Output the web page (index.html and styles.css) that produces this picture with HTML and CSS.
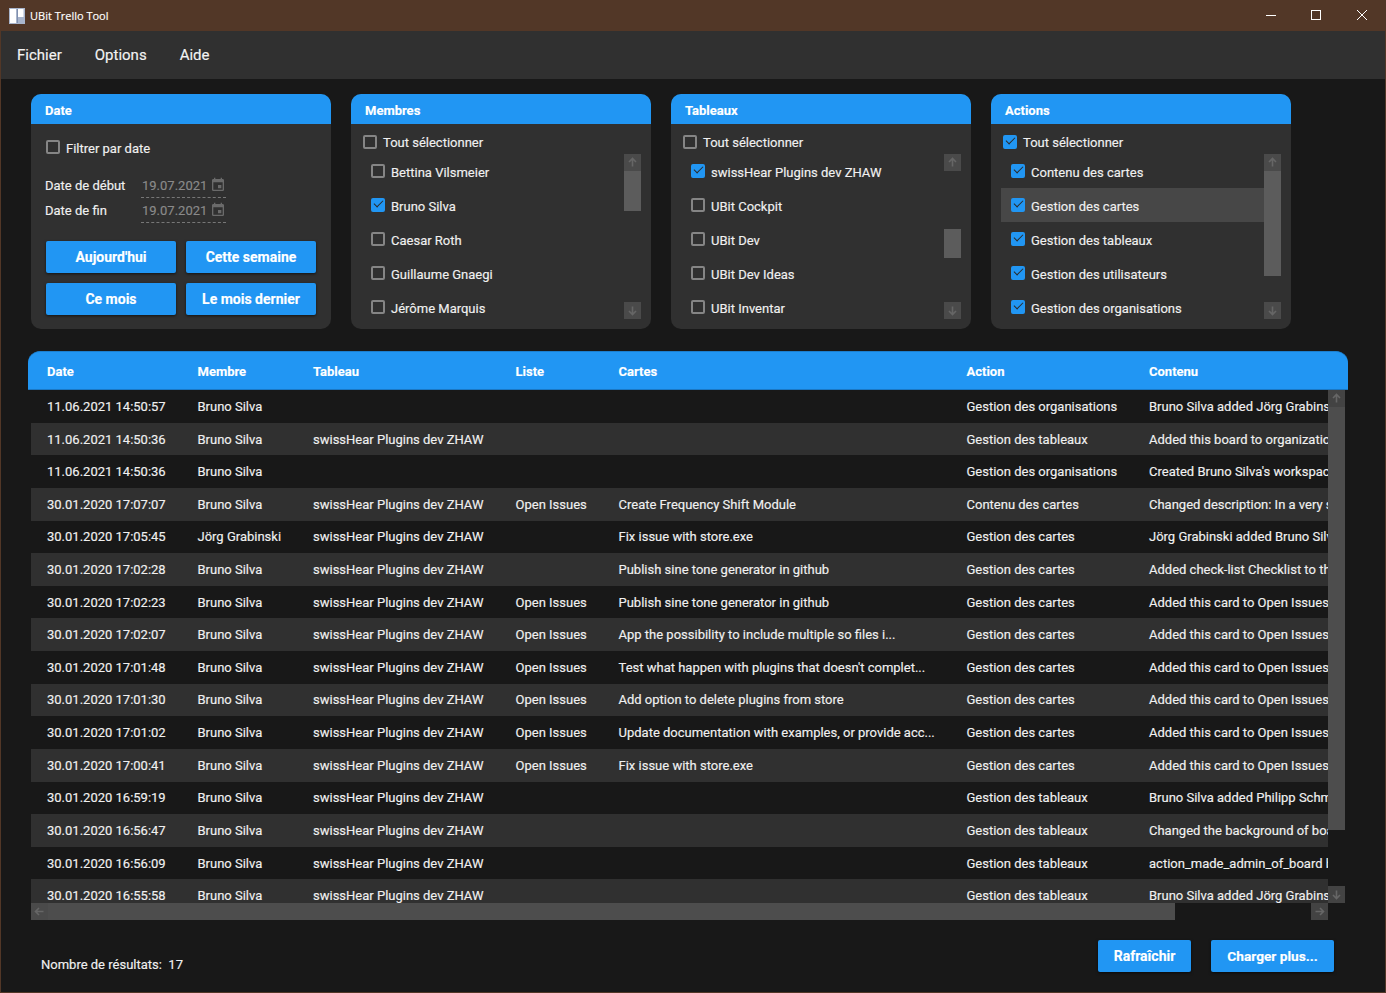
FILE: index.html
```html
<!DOCTYPE html>
<html lang="fr">
<head>
<meta charset="utf-8">
<title>UBit Trello Tool</title>
<link rel="stylesheet" href="styles.css">
</head>
<body>
<div class="window">
  <header class="titlebar">
    <svg class="logo" width="16" height="16" viewBox="0 0 16 16"><rect width="16" height="16" fill="#a9b5cc"/><rect x="1" y="1" width="6.500" height="14" fill="#fff"/><rect x="9" y="1" width="5.500" height="8" fill="#fff"/><rect x="7.500" y="1" width="1.500" height="14" fill="#7f8fae"/></svg>
    <span class="title">UBit Trello Tool</span>
    <div class="winctl">
      <svg width="46" height="31" viewBox="0 0 46 31"><path d="M19 15.500h10" stroke="#fff" fill="none"/></svg>
      <svg width="46" height="31" viewBox="0 0 46 31"><rect x="18.500" y="10.500" width="9" height="9" stroke="#fff" fill="none"/></svg>
      <svg width="46" height="31" viewBox="0 0 46 31"><path d="M18 10l10 10M28 10L18 20" stroke="#fff" fill="none"/></svg>
    </div>
  </header>
  <nav class="menu"><span>Fichier</span><span>Options</span><span>Aide</span></nav>
  <main class="content">
    <section class="filters">
      <div class="card">
        <h2 class="card-head">Date</h2>
        <div class="date-body">
          <label class="check date-check"><i class="box"></i>Filtrer par date</label>
          <div class="date-row"><span class="date-label">Date de début</span><span class="date-field">19.07.2021<svg class="cal" viewBox="0 0 24 24" width="16" height="16"><path fill="#6a6a6a" d="M19 19H5V8h14M16 1v2H8V1H6v2H5c-1.110 0-2 .89-2 2v14a2 2 0 0 0 2 2h14a2 2 0 0 0 2-2V5c0-1.100-.9-2-2-2h-1V1m-1 11h-5v5h5v-5z"/></svg></span></div>
          <div class="date-row"><span class="date-label">Date de fin</span><span class="date-field">19.07.2021<svg class="cal" viewBox="0 0 24 24" width="16" height="16"><path fill="#6a6a6a" d="M19 19H5V8h14M16 1v2H8V1H6v2H5c-1.110 0-2 .89-2 2v14a2 2 0 0 0 2 2h14a2 2 0 0 0 2-2V5c0-1.100-.9-2-2-2h-1V1m-1 11h-5v5h5v-5z"/></svg></span></div>
          <div class="date-btns">
            <button class="btn">Aujourd'hui</button><button class="btn">Cette semaine</button>
            <button class="btn">Ce mois</button><button class="btn">Le mois dernier</button>
          </div>
        </div>
      </div>

      <div class="card">
        <h2 class="card-head">Membres</h2>
        <label class="check all"><i class="box"></i>Tout sélectionner</label>
        <div class="listwrap">
          <ul class="list">
            <li class="check"><i class="box"></i>Bettina Vilsmeier</li>
            <li class="check"><i class="box on"></i>Bruno Silva</li>
            <li class="check"><i class="box"></i>Caesar Roth</li>
            <li class="check"><i class="box"></i>Guillaume Gnaegi</li>
            <li class="check"><i class="box"></i>Jérôme Marquis</li>
          </ul>
          <div class="vbar">
            <span class="arrow"><svg viewBox="0 0 17 17"><path d="M8.500 12.500v-8M5 8l3.500-3.500L12 8"/></svg></span>
            <span class="thumb thumb-a"></span>
            <span class="arrow bottom"><svg viewBox="0 0 17 17"><path d="M8.500 4.500v8M5 9l3.500 3.500L12 9"/></svg></span>
          </div>
        </div>
      </div>

      <div class="card">
        <h2 class="card-head">Tableaux</h2>
        <label class="check all"><i class="box"></i>Tout sélectionner</label>
        <div class="listwrap">
          <ul class="list">
            <li class="check"><i class="box on"></i>swissHear Plugins dev ZHAW</li>
            <li class="check"><i class="box"></i>UBit Cockpit</li>
            <li class="check"><i class="box"></i>UBit Dev</li>
            <li class="check"><i class="box"></i>UBit Dev Ideas</li>
            <li class="check"><i class="box"></i>UBit Inventar</li>
          </ul>
          <div class="vbar">
            <span class="arrow"><svg viewBox="0 0 17 17"><path d="M8.500 12.500v-8M5 8l3.500-3.500L12 8"/></svg></span>
            <span class="thumb thumb-b"></span>
            <span class="arrow bottom"><svg viewBox="0 0 17 17"><path d="M8.500 4.500v8M5 9l3.500 3.500L12 9"/></svg></span>
          </div>
        </div>
      </div>

      <div class="card">
        <h2 class="card-head">Actions</h2>
        <label class="check all"><i class="box on"></i>Tout sélectionner</label>
        <div class="listwrap">
          <ul class="list">
            <li class="check"><i class="box on"></i>Contenu des cartes</li>
            <li class="check hover"><i class="box on"></i>Gestion des cartes</li>
            <li class="check"><i class="box on"></i>Gestion des tableaux</li>
            <li class="check"><i class="box on"></i>Gestion des utilisateurs</li>
            <li class="check"><i class="box on"></i>Gestion des organisations</li>
          </ul>
          <div class="vbar">
            <span class="arrow"><svg viewBox="0 0 17 17"><path d="M8.500 12.500v-8M5 8l3.500-3.500L12 8"/></svg></span>
            <span class="thumb thumb-c"></span>
            <span class="arrow bottom"><svg viewBox="0 0 17 17"><path d="M8.500 4.500v8M5 9l3.500 3.500L12 9"/></svg></span>
          </div>
        </div>
      </div>
    </section>

    <section class="table">
      <div class="row thead"><span>Date</span><span>Membre</span><span>Tableau</span><span>Liste</span><span>Cartes</span><span>Action</span><span>Contenu</span></div>
      <div class="tbody">
        <div class="tleft">
          <div class="rows">
            <div class="row"><span>11.06.2021 14:50:57</span><span>Bruno Silva</span><span></span><span></span><span></span><span>Gestion des organisations</span><span>Bruno Silva added Jörg Grabinski to this board</span></div>
            <div class="row"><span>11.06.2021 14:50:36</span><span>Bruno Silva</span><span>swissHear Plugins dev ZHAW</span><span></span><span></span><span>Gestion des tableaux</span><span>Added this board to organization</span></div>
            <div class="row"><span>11.06.2021 14:50:36</span><span>Bruno Silva</span><span></span><span></span><span></span><span>Gestion des organisations</span><span>Created Bruno Silva's workspace</span></div>
            <div class="row"><span>30.01.2020 17:07:07</span><span>Bruno Silva</span><span>swissHear Plugins dev ZHAW</span><span>Open Issues</span><span>Create Frequency Shift Module</span><span>Contenu des cartes</span><span>Changed description: In a very simple</span></div>
            <div class="row"><span>30.01.2020 17:05:45</span><span>Jörg Grabinski</span><span>swissHear Plugins dev ZHAW</span><span></span><span>Fix issue with store.exe</span><span>Gestion des cartes</span><span>Jörg Grabinski added Bruno Silva</span></div>
            <div class="row"><span>30.01.2020 17:02:28</span><span>Bruno Silva</span><span>swissHear Plugins dev ZHAW</span><span></span><span>Publish sine tone generator in github</span><span>Gestion des cartes</span><span>Added check-list Checklist to this card</span></div>
            <div class="row"><span>30.01.2020 17:02:23</span><span>Bruno Silva</span><span>swissHear Plugins dev ZHAW</span><span>Open Issues</span><span>Publish sine tone generator in github</span><span>Gestion des cartes</span><span>Added this card to Open Issues</span></div>
            <div class="row"><span>30.01.2020 17:02:07</span><span>Bruno Silva</span><span>swissHear Plugins dev ZHAW</span><span>Open Issues</span><span>App the possibility to include multiple so files i...</span><span>Gestion des cartes</span><span>Added this card to Open Issues</span></div>
            <div class="row"><span>30.01.2020 17:01:48</span><span>Bruno Silva</span><span>swissHear Plugins dev ZHAW</span><span>Open Issues</span><span>Test what happen with plugins that doesn't complet...</span><span>Gestion des cartes</span><span>Added this card to Open Issues</span></div>
            <div class="row"><span>30.01.2020 17:01:30</span><span>Bruno Silva</span><span>swissHear Plugins dev ZHAW</span><span>Open Issues</span><span>Add option to delete plugins from store</span><span>Gestion des cartes</span><span>Added this card to Open Issues</span></div>
            <div class="row"><span>30.01.2020 17:01:02</span><span>Bruno Silva</span><span>swissHear Plugins dev ZHAW</span><span>Open Issues</span><span>Update documentation with examples, or provide acc...</span><span>Gestion des cartes</span><span>Added this card to Open Issues</span></div>
            <div class="row"><span>30.01.2020 17:00:41</span><span>Bruno Silva</span><span>swissHear Plugins dev ZHAW</span><span>Open Issues</span><span>Fix issue with store.exe</span><span>Gestion des cartes</span><span>Added this card to Open Issues</span></div>
            <div class="row"><span>30.01.2020 16:59:19</span><span>Bruno Silva</span><span>swissHear Plugins dev ZHAW</span><span></span><span></span><span>Gestion des tableaux</span><span>Bruno Silva added Philipp Schmid</span></div>
            <div class="row"><span>30.01.2020 16:56:47</span><span>Bruno Silva</span><span>swissHear Plugins dev ZHAW</span><span></span><span></span><span>Gestion des tableaux</span><span>Changed the background of board</span></div>
            <div class="row"><span>30.01.2020 16:56:09</span><span>Bruno Silva</span><span>swissHear Plugins dev ZHAW</span><span></span><span></span><span>Gestion des tableaux</span><span>action_made_admin_of_board by</span></div>
            <div class="row"><span>30.01.2020 16:55:58</span><span>Bruno Silva</span><span>swissHear Plugins dev ZHAW</span><span></span><span></span><span>Gestion des tableaux</span><span>Bruno Silva added Jörg Grabinski</span></div>
          </div>
          <div class="hbar">
            <span class="harrow"><svg viewBox="0 0 17 17"><path d="M12.500 8.500h-8M8 5L4.500 8.500 8 12"/></svg></span>
            <span class="hthumb"></span>
            <span class="harrow end"><svg viewBox="0 0 17 17"><path d="M4.500 8.500h8M9 5l3.500 3.500L9 12"/></svg></span>
          </div>
        </div>
        <div class="tvbar">
          <span class="arrow dark"><svg viewBox="0 0 17 17"><path d="M8.500 12.500v-8M5 8l3.500-3.500L12 8"/></svg></span>
          <span class="tthumb"></span>
          <span class="arrow dark bottom"><svg viewBox="0 0 17 17"><path d="M8.500 4.500v8M5 9l3.500 3.500L12 9"/></svg></span>
        </div>
      </div>
    </section>

    <footer class="foot">
      <span class="count">Nombre de résultats:&nbsp; 17</span>
      <div class="foot-btns"><button class="btn refresh">Rafraîchir</button><button class="btn more">Charger plus...</button></div>
    </footer>
  </main>
</div>
</body>
</html>
```
FILE: styles.css
```css
* { box-sizing: border-box; }
html, body { margin: 0; height: 100%; background: #181818; overflow: hidden; }
body { font-family: Roboto, "Liberation Sans", sans-serif; font-size: 13px; color: #f0f0f0; -webkit-text-stroke: 0.150px; }
.window { height: 993px; display: flex; flex-direction: column; border: 1px solid #523727; border-top: 0; }
.titlebar { height: 31px; flex: none; background: #523727; display: flex; align-items: center; padding-left: 8px; margin: 0 -1px; }
.logo { flex: none; margin-left: 1px; }
.title { font-family: "Open Sans", sans-serif; font-size: 11px; color: #fff; margin-left: 5px; }
.winctl { margin-left: auto; margin-right: 1px; display: flex; }
.winctl svg { display: block; }
.menu { height: 48px; flex: none; background: #303030; display: flex; align-items: center; gap: 33px; padding-left: 16px; font-size: 15px; color: #f3f3f3; }
.content { flex: 1; min-height: 0; background: #181818; display: flex; flex-direction: column; }
.filters { display: flex; gap: 20px; padding: 15px 0 0 30px; }
.card { width: 300px; height: 235px; background: #303030; border-radius: 10px; overflow: hidden; display: flex; flex-direction: column; }
.card-head { margin: 0; height: 30px; flex: none; background: #2196f3; color: #fff; font-size: 13px; font-weight: 700; line-height: 33px; padding-left: 14px; }
.check { display: flex; align-items: center; color: #f0f0f0; }
.box { width: 14px; height: 14px; margin-right: 6px; flex: none; border: 2px solid #858585; border-radius: 2px; position: relative; top: -0.500px; }
.box.on { background: #2196f3; border-color: #2196f3; }
.box.on::after { content: ""; position: absolute; left: 1px; top: 0; width: 8px; height: 4px; border-left: 1.600px solid #2b2b2b; border-bottom: 1.600px solid #2b2b2b; transform: rotate(-45deg); }
.all { height: 30px; padding: 6px 0 0 12px; flex: none; }
.listwrap { position: relative; flex: 1; min-height: 0; padding-left: 10px; }
.list { list-style: none; margin: 0; padding: 0; }
.list li { height: 34px; padding: 2px 0 0 10px; width: 263px; }
.list li .box { top: -1.500px; }
.list li.hover { background: #474747; }
.vbar { position: absolute; right: 10px; top: 0; bottom: 10px; width: 17px; }
.arrow { display: block; width: 17px; height: 17px; background: #4a4a4a; }
.arrow.dark { background: #434343; }
.arrow.bottom { position: absolute; bottom: 0; left: 0; }
.arrow svg, .harrow svg { display: block; width: 17px; height: 17px; fill: none; stroke: #666; stroke-width: 1.600; }
.thumb { display: block; width: 17px; background: #5c5c5c; }
.thumb-a { height: 40px; }
.thumb-b { height: 29px; margin-top: 58px; }
.thumb-c { height: 105px; }
.date-body { padding: 0 14px; }
.date-check { height: 49px; padding: 0 1px; }
.date-check .box { top: -2px; }
.date-row { display: flex; align-items: center; height: 25px; }
.date-label { width: 96px; }
.date-field { width: 85px; height: 25px; display: flex; align-items: center; justify-content: space-between; padding: 0 0 0 1px; color: #8a8a8a; border-bottom: 1px dashed #777; }
.date-btns { display: grid; grid-template-columns: 130px 130px; gap: 10px; margin-top: 18px; padding-left: 1px; grid-auto-rows: 32px; }
.btn { border: 0; border-radius: 2px; background: #2196f3; color: #fff; font-family: inherit; font-size: 14px; font-weight: 700; box-shadow: 0 1px 3px rgba(0,0,0,.6); padding: 0; }
.table { margin: 22px 0 0 27px; width: 1320px; display: flex; flex-direction: column; }
.row { display: grid; grid-template-columns: 150.500px 115.500px 202.500px 103px 348px 182.500px 195px; height: 32.620px; align-items: center; white-space: nowrap; }
.row > span { overflow: hidden; padding-left: 16px; }
.rows .row:nth-child(even) { background: #303030; }
.thead { height: 39px; background: #2196f3; color: #fff; font-weight: 700; border-radius: 12px 12px 0 0; padding: 1px 0 0 3px; border-top: 1px solid #1c7fcf; border-bottom: 1px solid #1b78c4; }
.tbody { display: flex; height: 530px; padding-left: 3px; }
.tleft { width: 1297px; display: flex; flex-direction: column; }
.rows { height: 513px; overflow: hidden; padding-top: 0.200px; }
.rows .row { width: 1297px; }
.hbar { height: 17px; display: flex; flex: none; }
.harrow { width: 17px; height: 17px; background: #4a4a4a; flex: none; }
.hthumb { width: 1127px; background: #4d4d4d; }
.harrow.end { margin-left: auto; background: #434343; }
.tvbar { width: 17px; height: 513px; position: relative; }
.tthumb { display: block; width: 17px; height: 423px; background: #4d4d4d; }
.foot { flex: 1; display: flex; }
.count { margin: 37px 0 0 40px; }
.foot-btns { display: flex; gap: 20px; margin-left: auto; margin-top: 20px; margin-right: 51px; height: 32px; }
.refresh { width: 93px; }
.more { width: 123px; font-size: 13.700px; }
```
